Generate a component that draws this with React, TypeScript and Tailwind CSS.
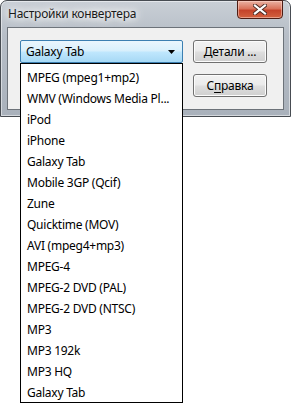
import React from "react";

const items = [
  "MPEG (mpeg1+mp2)",
  "WMV (Windows Media Pl...",
  "iPod",
  "iPhone",
  "Galaxy Tab",
  "Mobile 3GP (Qcif)",
  "Zune",
  "Quicktime (MOV)",
  "AVI (mpeg4+mp3)",
  "MPEG-4",
  "MPEG-2 DVD (PAL)",
  "MPEG-2 DVD (NTSC)",
  "MP3",
  "MP3 192k",
  "MP3 HQ",
  "Galaxy Tab",
];

export default function App() {
  return (
    <div className="relative w-[291px] h-[403px] bg-white font-['Noto_Sans',sans-serif] text-[12px] tracking-[-0.25px] text-black overflow-hidden">
      {/* Window */}
      <div className="w-[291px] h-[117px] rounded-t-[7px] border border-[#474c52] bg-[linear-gradient(180deg,#c9cfd6_0%,#b7bec7_30%,#a9b1bb_100%)] flex flex-col shadow-[inset_0_0_0_1px_rgba(255,255,255,0.5)]">
        <div className="h-[26px] flex items-start justify-between relative">
          <div className="pl-[7px] pt-[5px] leading-[16px] text-[12px] text-[#1a1a1a] [text-shadow:0_0_6px_#ffffff,0_0_10px_#ffffff,0_0_14px_#ffffff]">
            Настройки конвертера
          </div>
          <div className="mr-[7px] w-[46px] h-[19px] -mt-px rounded-b-[4px] border border-[#4d1d14] bg-[linear-gradient(180deg,#eab2a3_0%,#d9735b_45%,#c5432a_55%,#d3623f_100%)] shadow-[inset_0_0_0_1px_rgba(255,220,210,0.5)] flex items-center justify-center">
            <svg width="14" height="11" viewBox="0 0 14 11">
              <path d="M2 1.5 L12 9.5 M12 1.5 L2 9.5" stroke="#4a2a24" strokeWidth="4" strokeLinecap="square" />
              <path d="M2 1.5 L12 9.5 M12 1.5 L2 9.5" stroke="#ffffff" strokeWidth="2.2" strokeLinecap="square" />
            </svg>
          </div>
        </div>
        <div className="flex-1 mx-[6px] mb-[6px] border border-[#6c7279] bg-[#f0f0f0] pt-[12px] pl-[12px] flex gap-[10px]">
          <div className="w-[163px] h-[23px] rounded-[2px] border border-[#3c7fb1] bg-[linear-gradient(180deg,#eaf6fd_0%,#d9f0fc_45%,#bee6fd_55%,#a7d9f5_100%)] flex items-center justify-between pl-[5px] pr-[7px]">
            <span className="leading-[16px]">Galaxy Tab</span>
            <svg width="7" height="4" viewBox="0 0 7 4">
              <path d="M0 0 H7 L3.5 4 Z" fill="#000" />
            </svg>
          </div>
          <div className="flex flex-col gap-[11px]">
            <div className="w-[74px] h-[23px] rounded-[3px] border border-[#707070] bg-[linear-gradient(180deg,#f2f2f2_0%,#ebebeb_45%,#dddddd_55%,#cfcfcf_100%)] shadow-[inset_0_0_0_1px_#fcfcfc] flex items-center justify-center leading-[16px]">
              Детали ...
            </div>
            <div className="w-[74px] h-[23px] rounded-[3px] border border-[#707070] bg-[linear-gradient(180deg,#f2f2f2_0%,#ebebeb_45%,#dddddd_55%,#cfcfcf_100%)] shadow-[inset_0_0_0_1px_#fcfcfc] flex items-center justify-center leading-[16px]">
              <span>
                С<span className="underline underline-offset-2">п</span>равка
              </span>
            </div>
          </div>
        </div>
      </div>

      {/* Dropdown list */}
      <div className="absolute left-[20px] top-[63px] w-[163px] h-[340px] border border-black bg-white pt-[3px] flex flex-col">
        {items.map((t, i) => (
          <div key={i} className="h-[21px] shrink-0 pl-[6px] flex items-center whitespace-nowrap overflow-hidden leading-[16px]">
            {t}
          </div>
        ))}
      </div>
    </div>
  );
}
